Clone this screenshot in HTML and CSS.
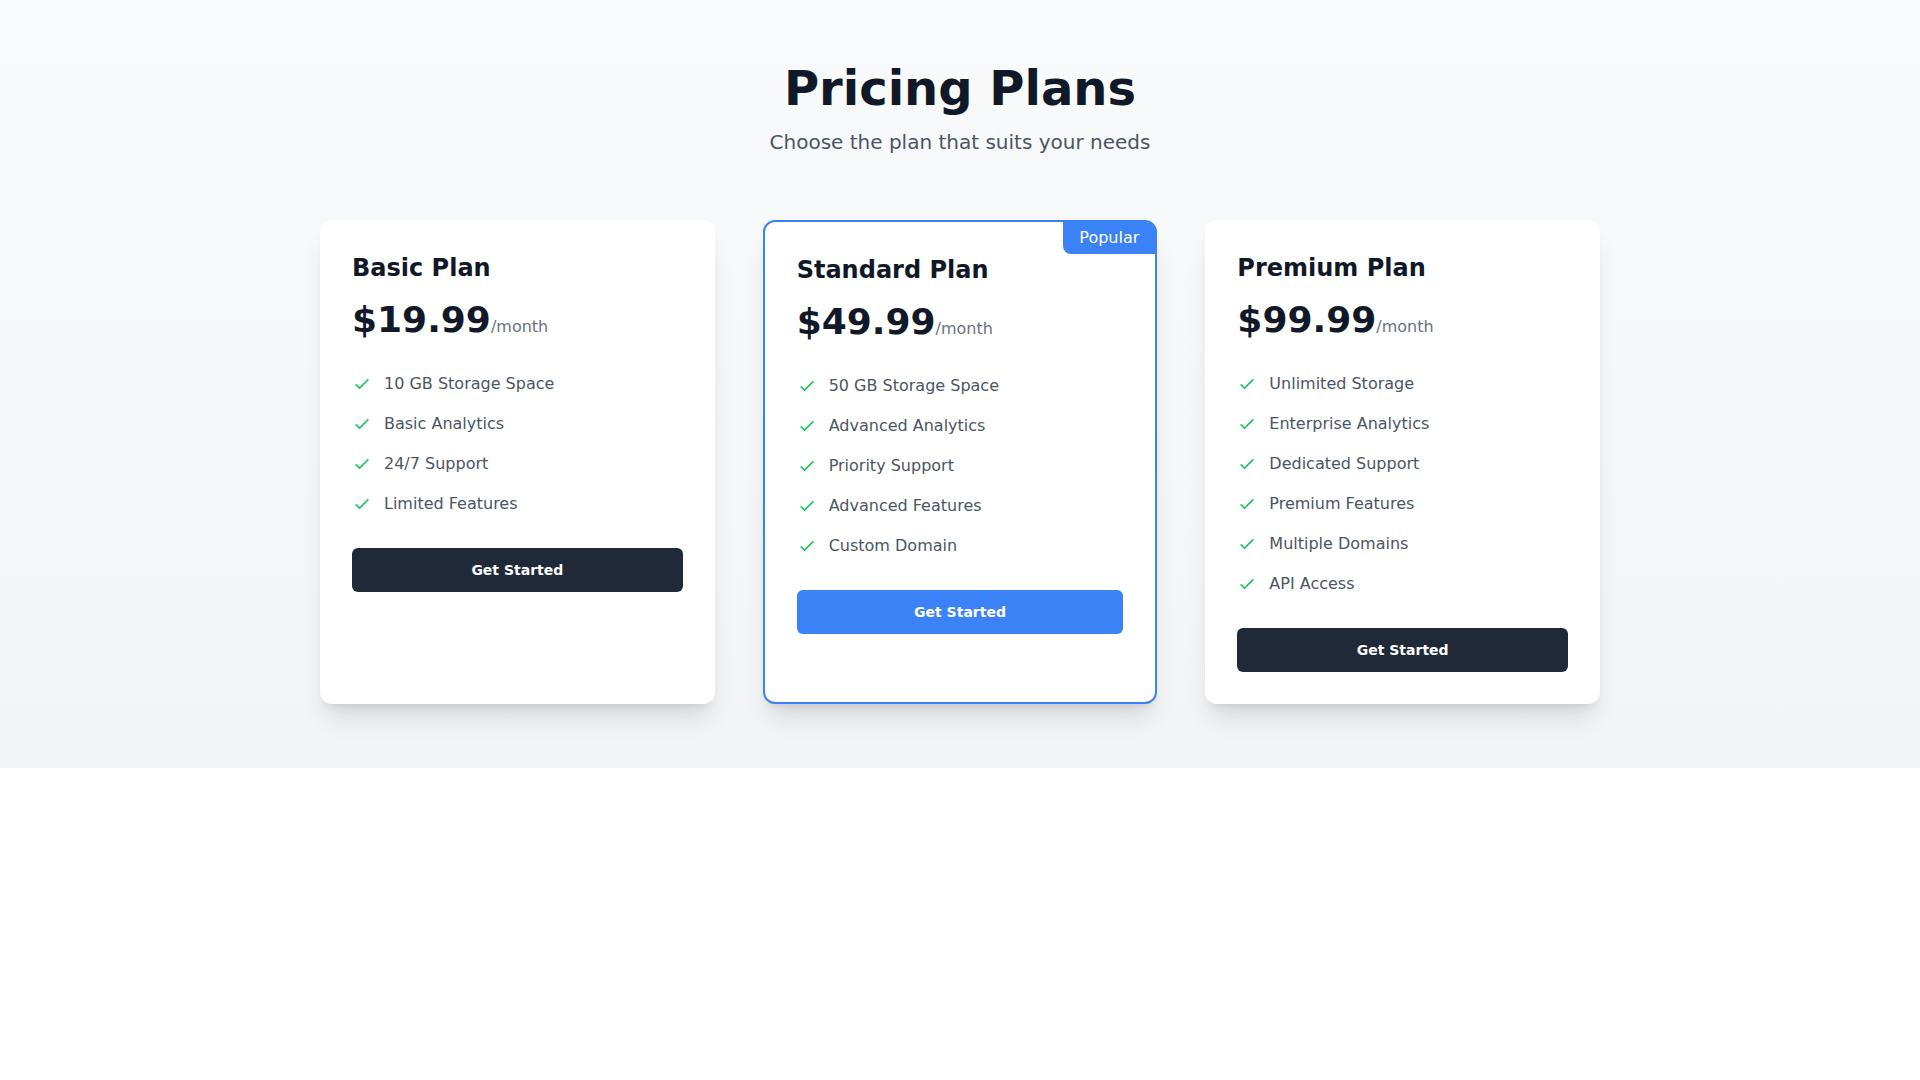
FILE: index.html
```html
<!DOCTYPE html>
<html lang="en">
<head>
<meta charset="utf-8">
<title>Pricing Plans</title>
<link rel="stylesheet" href="styles.css">
</head>
<body>
<section class="pricing">
  <header class="pricing-head">
    <h2 class="pricing-title">Pricing Plans</h2>
    <p class="pricing-sub">Choose the plan that suits your needs</p>
  </header>
  <div class="plans">
    <div class="card">
      <h3 class="plan-name">Basic Plan</h3>
      <div class="price"><span class="amount">$19.99</span><span class="period">/month</span></div>
      <ul class="features">
        <li><svg class="check" viewBox="0 0 24 24"><path d="M5 13l4 4L19 7"/></svg>10 GB Storage Space</li>
        <li><svg class="check" viewBox="0 0 24 24"><path d="M5 13l4 4L19 7"/></svg>Basic Analytics</li>
        <li><svg class="check" viewBox="0 0 24 24"><path d="M5 13l4 4L19 7"/></svg>24/7 Support</li>
        <li><svg class="check" viewBox="0 0 24 24"><path d="M5 13l4 4L19 7"/></svg>Limited Features</li>
      </ul>
      <button class="btn btn-dark">Get Started</button>
    </div>
    <div class="card card-popular">
      <span class="badge">Popular</span>
      <h3 class="plan-name">Standard Plan</h3>
      <div class="price"><span class="amount">$49.99</span><span class="period">/month</span></div>
      <ul class="features">
        <li><svg class="check" viewBox="0 0 24 24"><path d="M5 13l4 4L19 7"/></svg>50 GB Storage Space</li>
        <li><svg class="check" viewBox="0 0 24 24"><path d="M5 13l4 4L19 7"/></svg>Advanced Analytics</li>
        <li><svg class="check" viewBox="0 0 24 24"><path d="M5 13l4 4L19 7"/></svg>Priority Support</li>
        <li><svg class="check" viewBox="0 0 24 24"><path d="M5 13l4 4L19 7"/></svg>Advanced Features</li>
        <li><svg class="check" viewBox="0 0 24 24"><path d="M5 13l4 4L19 7"/></svg>Custom Domain</li>
      </ul>
      <button class="btn btn-blue">Get Started</button>
    </div>
    <div class="card">
      <h3 class="plan-name">Premium Plan</h3>
      <div class="price"><span class="amount">$99.99</span><span class="period">/month</span></div>
      <ul class="features">
        <li><svg class="check" viewBox="0 0 24 24"><path d="M5 13l4 4L19 7"/></svg>Unlimited Storage</li>
        <li><svg class="check" viewBox="0 0 24 24"><path d="M5 13l4 4L19 7"/></svg>Enterprise Analytics</li>
        <li><svg class="check" viewBox="0 0 24 24"><path d="M5 13l4 4L19 7"/></svg>Dedicated Support</li>
        <li><svg class="check" viewBox="0 0 24 24"><path d="M5 13l4 4L19 7"/></svg>Premium Features</li>
        <li><svg class="check" viewBox="0 0 24 24"><path d="M5 13l4 4L19 7"/></svg>Multiple Domains</li>
        <li><svg class="check" viewBox="0 0 24 24"><path d="M5 13l4 4L19 7"/></svg>API Access</li>
      </ul>
      <button class="btn btn-dark">Get Started</button>
    </div>
  </div>
</section>
</body>
</html>
```
FILE: styles.css
```css
* { box-sizing: border-box; }
html, body { margin: 0; padding: 0; background: #ffffff; }
body { font-family: "DejaVu Sans", "Noto Sans", sans-serif; }

.pricing {
  background: linear-gradient(to bottom, #f9fafb, #f3f4f6);
  padding: 64px 0;
}
.pricing-head { text-align: center; margin-bottom: 64px; }
.pricing-title {
  margin: 0 0 16px;
  font-size: 48px;
  line-height: 48px;
  font-weight: 700;
  color: #111827;
}
.pricing-sub {
  margin: 0;
  font-size: 20px;
  line-height: 28px;
  color: #4b5563;
}

.plans {
  width: 1280px;
  margin: 0 auto;
  display: grid;
  grid-template-columns: repeat(3, 1fr);
  gap: 48px;
}
.card {
  position: relative;
  background: #ffffff;
  border-radius: 12px;
  padding: 32px;
  box-shadow: 0 20px 25px -5px rgba(0,0,0,0.1), 0 8px 10px -6px rgba(0,0,0,0.1);
}
.card-popular { border: 2px solid #3b82f6; }
.badge {
  position: absolute;
  top: 0;
  right: 0;
  background: #3b82f6;
  color: #ffffff;
  font-size: 16px;
  line-height: 24px;
  padding: 4px 16px;
  border-bottom-left-radius: 8px;
  border-top-right-radius: 9px;
}
.plan-name {
  margin: 0 0 16px;
  font-size: 24px;
  line-height: 32px;
  font-weight: 700;
  color: #111827;
}
.price {
  display: flex;
  align-items: baseline;
  margin-bottom: 32px;
}
.amount {
  font-size: 36px;
  line-height: 40px;
  font-weight: 700;
  color: #111827;
}
.period {
  font-size: 16px;
  line-height: 24px;
  color: #6b7280;
}
.features {
  list-style: none;
  margin: 0 0 32px;
  padding: 0;
  display: flex;
  flex-direction: column;
  gap: 16px;
}
.features li {
  display: flex;
  align-items: center;
  font-size: 16px;
  line-height: 24px;
  color: #4b5563;
}
.check {
  width: 20px;
  height: 20px;
  margin-right: 12px;
  flex: none;
  fill: none;
  stroke: #22c55e;
  stroke-width: 2;
  stroke-linecap: round;
  stroke-linejoin: round;
}
.btn {
  display: block;
  width: 100%;
  border: 0;
  border-radius: 6px;
  padding: 12px 0;
  font-family: inherit;
  font-size: 14px;
  line-height: 20px;
  font-weight: 700;
  color: #ffffff;
  cursor: pointer;
}
.btn-dark { background: #1f2937; }
.btn-blue { background: #3b82f6; }
```
